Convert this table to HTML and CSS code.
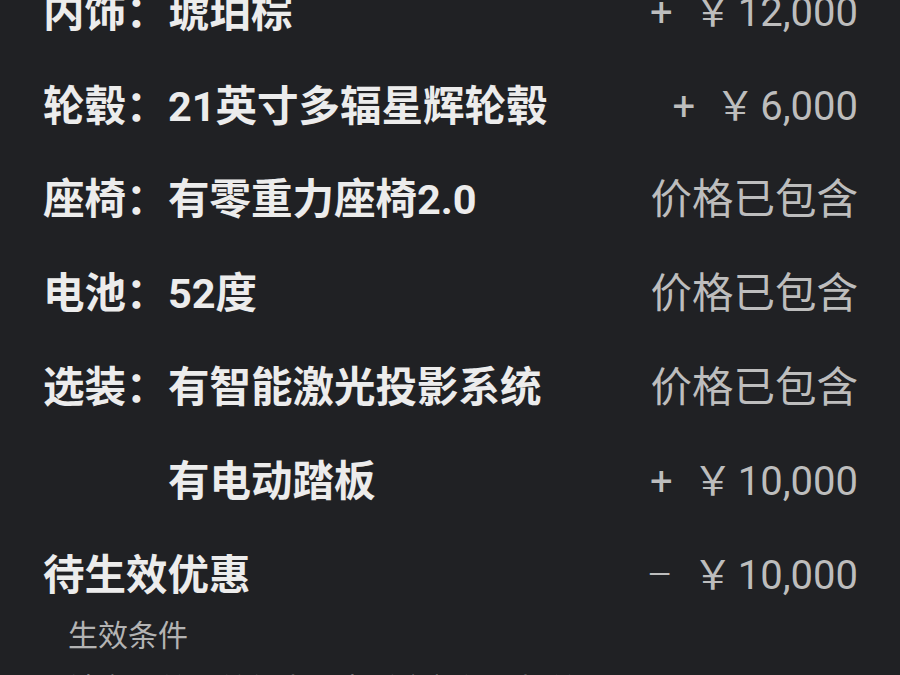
FILE: index.html
```html
<!DOCTYPE html>
<html lang="zh-CN">
<head>
  <meta charset="UTF-8" />
  <meta name="viewport" content="width=device-width, initial-scale=1.0" />
  <title>配置清单</title>
  <link rel="stylesheet" href="styles.css">
</head>
<body>

  <!-- 配置明细 -->
  <div class="config-list">
    <div class="row">
      <span class="label">内饰：</span>
      <span class="value">琥珀棕</span>
      <span class="price amount">+<span class="yen">￥</span>12,000</span>
    </div>
    <div class="row">
      <span class="label">轮毂：</span>
      <span class="value">21英寸多辐星辉轮毂</span>
      <span class="price amount">+<span class="yen">￥</span>6,000</span>
    </div>
    <div class="row">
      <span class="label">座椅：</span>
      <span class="value">有零重力座椅2.0</span>
      <span class="price">价格已包含</span>
    </div>
    <div class="row">
      <span class="label">电池：</span>
      <span class="value">52度</span>
      <span class="price">价格已包含</span>
    </div>
    <div class="row">
      <span class="label">选装：</span>
      <span class="value">有智能激光投影系统</span>
      <span class="price">价格已包含</span>
    </div>
    <div class="row">
      <span class="label"></span>
      <span class="value">有电动踏板</span>
      <span class="price amount">+<span class="yen">￥</span>10,000</span>
    </div>
    <div class="row">
      <span class="value">待生效优惠</span>
      <span class="price amount"><span class="minus">–</span><span class="yen">￥</span>10,000</span>
    </div>
  </div>

  <!-- 生效条件 -->
  <div class="condition">
    <div class="condition-title">生效条件</div>
    <p>锁定订单后首年内可享受全部优惠权益</p>
  </div>

</body>
</html>
```

FILE: styles.css
```css
* {
  box-sizing: border-box;
}
body, html {
  margin: 0;
  padding: 0;
  height: 100%;
  background: #202124;
  font-family: 'Roboto', 'Noto Sans CJK SC', sans-serif;
  overflow: hidden;
}
.config-list {
  margin-top: -38px;
  padding: 0 42px 0 43px;
}
.row {
  display: flex;
  align-items: center;
  height: 93.8px;
}
.label {
  width: 125px;
  flex-shrink: 0;
  font-size: 41.5px;
  font-weight: 700;
  color: #ececec;
  white-space: nowrap;
}
.value {
  flex: 1;
  font-size: 41.5px;
  font-weight: 700;
  color: #ececec;
  white-space: nowrap;
}
.price {
  font-size: 41.5px;
  font-weight: 400;
  color: #bdbdbd;
  white-space: nowrap;
}
.price.amount {
  font-size: 40px;
}
.minus {
  font-weight: 300;
}
.yen {
  margin-left: 20px;
  margin-right: 5px;
}
.condition {
  padding: 0 0 0 68px;
}
.condition-title {
  font-size: 30px;
  color: #b3b3b3;
  line-height: 50px;
  margin-top: -8px;
}
.condition p {
  margin: 4px 0 0;
  font-size: 30px;
  color: #cfcfcf;
  line-height: 50px;
}
```
